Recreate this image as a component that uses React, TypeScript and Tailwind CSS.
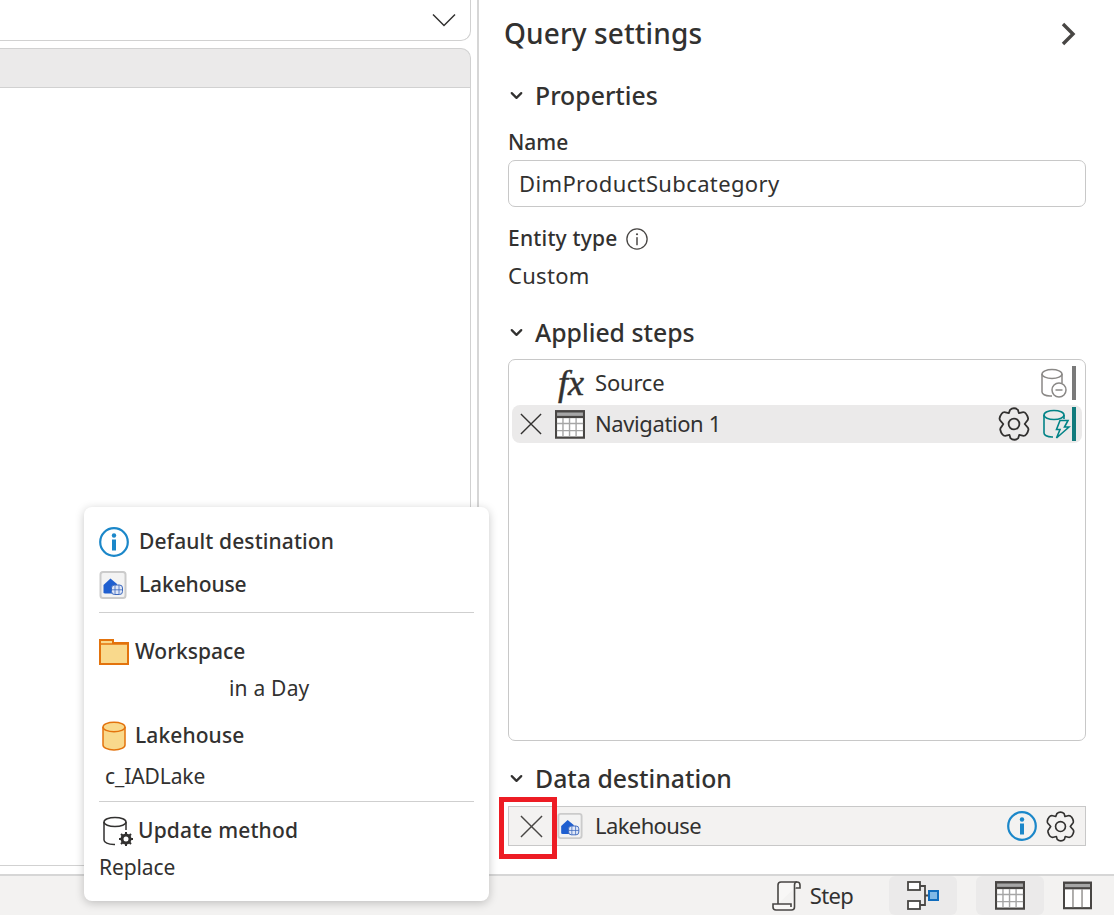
import { ChevronDown } from "lucide-react";

const font = "font-['Noto_Sans','Open_Sans',sans-serif]";

function SectionTitle({ children, className }: { children: string; className: string }) {
  return (
    <div className={`flex items-center ${className}`}>
      <ChevronDown size={19} strokeWidth={2.800} className="ml-[-1px] mr-[-1px] text-[#323130]" />
      <span className="ml-[10px] text-[24.800px] leading-[32px] font-medium text-[#323130]">{children}</span>
    </div>
  );
}

function Cross({ size, color = "#323130" }: { size: number; color?: string }) {
  return (
    <svg width={size} height={size} viewBox="0 0 24 24" fill="none">
      <path d="M1 1 23 23M23 1 1 23" stroke={color} strokeWidth="1.500" />
    </svg>
  );
}

// six toothed cog like the fluent one
function Gear({ size = 32 }: { size?: number }) {
  return (
    <svg width={size} height={size} viewBox="0 0 32 32" fill="none">
      <path
        d="M12.500 3.500c1-1 2-1.500 3.500-1.500s2.500.5 3.500 1.500l.8 2.800 3-.7c1.400-.3 2.600.2 3.400 1.300 1 1.300 1.500 2.500 1.800 4 .2 1-.3 1.800-1 2.500L25.500 16l2.300 2.600c.7.700 1.200 1.500 1 2.500-.3 1.500-.8 2.700-1.800 4-.8 1.100-2 1.600-3.400 1.300l-3-.7-.8 2.800c-1 1-2 1.500-3.500 1.500s-2.500-.5-3.500-1.500l-.8-2.800-3 .7c-1.400.3-2.600-.2-3.400-1.300-1-1.300-1.500-2.500-1.800-4-.2-1 .3-1.800 1-2.500L6.500 16l-2.300-2.600c-.7-.7-1.200-1.500-1-2.500.3-1.500.8-2.700 1.800-4 .8-1.100 2-1.600 3.400-1.300l3 .7z"
        stroke="#323130"
        strokeWidth="1.600"
        strokeLinejoin="round"
      />
      <circle cx="16" cy="16" r="4.800" stroke="#323130" strokeWidth="1.600" />
    </svg>
  );
}

function InfoCircle({ size, color = "#1b87c9", thin = false }: { size: number; color?: string; thin?: boolean }) {
  return (
    <svg width={size} height={size} viewBox="0 0 30 30" fill="none">
      <circle cx="15" cy="15" r="13.800" stroke={color} strokeWidth={thin ? 1.800 : 2.200} />
      <circle cx="15" cy="8.500" r={thin ? 1.500 : 2.200} fill={color} />
      <rect x={thin ? 14 : 13} y="12.500" width={thin ? 2 : 4} height="11" fill={color} />
    </svg>
  );
}

function LakehouseIcon({ size = 28 }: { size?: number }) {
  return (
    <svg width={size} height={size} viewBox="0 0 28 28">
      <rect x="1.500" y="1" width="25" height="26" rx="2.500" fill="#f3f3f3" stroke="#cbcbcb" strokeWidth="2" />
      <path d="M4.500 22v-8l7-6.500 6.500 5.500v9.500H6z" fill="#1f5fd0" />
      <rect x="12.500" y="14" width="11" height="9.500" rx="3" fill="#dfe7f7" stroke="#3c68bd" strokeWidth="1" />
      <path d="M12.500 18.800h11M16 14v9.500M20 14v9.500" stroke="#3c68bd" strokeWidth=".8" />
    </svg>
  );
}

function TableIcon({ w = 32, h = 30, cols = 4, color = "#484644" }: { w?: number; h?: number; cols?: number; color?: string }) {
  const xs = cols === 4 ? [8.500, 15.500, 22.500] : [11, 21];
  return (
    <svg width={w} height={h} viewBox="0 0 32 30">
      <rect x="1" y="1" width="30" height="28" fill="#fff" stroke={color} strokeWidth="2.400" />
      <rect x="1" y="1" width="30" height="6" fill="#a6a6a6" stroke={color} strokeWidth="2.400" />
      {cols === 4 && <path d="M2 14h28M2 21.500h28" stroke="#a6a6a6" strokeWidth="1.500" />}
      {xs.map((x) => (
        <path key={x} d={`M${x} 8v20`} stroke={cols === 4 ? "#a6a6a6" : "#8a8886"} strokeWidth="1.500" />
      ))}
    </svg>
  );
}

export default function App() {
  return (
    <div className={`relative flex h-[915px] w-[1114px] flex-col overflow-hidden bg-white text-[#323130] ${font}`}>
      <div className="flex h-[874px]">
        {/* left side, cropped data preview */}
        <div className="flex w-[479px] shrink-0 flex-col border-r-2 border-[#d6d6d6] pr-[6px]">
          <div className="flex h-[41px] items-center justify-end rounded-br-[10px] border-r border-b border-[#d1d1d1] pr-[14px]">
            <svg width="24" height="14" viewBox="0 0 24 14" fill="none">
              <path d="M1 1.500 12 12.500 23 1.500" stroke="#323130" strokeWidth="1.500" />
            </svg>
          </div>
          <div className="mt-[7px] h-[40px] rounded-tr-[10px] border-t border-r border-b border-[#d1d1d1] bg-[#ebeaea]" />
          <div className="h-[778px] border-r border-b border-[#d1d1d1]" />
        </div>

        {/* query settings */}
        <div className="flex min-w-0 flex-1 flex-col pr-[28px] pl-[29px]">
          <div className="mt-[14px] flex h-[38px] items-center justify-between">
            <h1 className="ml-[-4px] text-[28px] font-medium tracking-[0.1px] text-[#323130]">Query settings</h1>
            <svg width="17" height="24" viewBox="0 0 17 24" fill="none" className="mr-[9px] mt-[2px]">
              <path d="M3 2 13 12 3 22" stroke="#484644" strokeWidth="3.400" />
            </svg>
          </div>

          <SectionTitle className="mt-[27px]">Properties</SectionTitle>
          <label className="mt-[17px] text-[21px] leading-[28px] font-medium">Name</label>
          <div className="mt-[4px] flex h-[47px] items-center rounded-[7px] border border-[#c8c8c8] pl-[10px] text-[22px] tracking-[0.37px]">
            DimProductSubcategory
          </div>
          <div className="mt-[17px] flex h-[30px] items-center gap-[8px]">
            <span className="text-[21px] font-medium tracking-[0.2px]">Entity type</span>
            <InfoCircle size={22} color="#484644" thin />
          </div>
          <div className="mt-[6px] h-[30px] text-[22px] leading-[30px] tracking-[0.3px]">Custom</div>

          <SectionTitle className="mt-[26px]">Applied steps</SectionTitle>
          <div className="mt-[11px] flex h-[382px] flex-col rounded-[7px] border border-[#c8c8c8] px-[3px] pt-[5px]">
            <div className="flex h-[35px] items-center pr-[6px]">
              <span className="ml-[46px] w-[37px] font-['Liberation_Serif',serif] text-[36px] leading-[34px] italic [-webkit-text-stroke:0.5px_#323130]">fx</span>
              <span className="text-[22px] tracking-[-0.2px]">Source</span>
              <div className="ml-auto flex items-center gap-[5px]">
                <svg width="26" height="30" viewBox="0 0 26 30" fill="none">
                  <path d="M1 6v18c0 2 3 4 8 4h2M21 6v9" stroke="#8a8886" strokeWidth="1.500" />
                  <ellipse cx="11" cy="6" rx="10" ry="4.500" stroke="#8a8886" strokeWidth="1.500" />
                  <circle cx="18" cy="22" r="7" stroke="#8a8886" strokeWidth="1.500" fill="#fff" />
                  <path d="M14.500 22h7" stroke="#8a8886" strokeWidth="1.500" />
                </svg>
                <div className="h-[34px] w-[4px] bg-[#7a7a7a]" />
              </div>
            </div>
            <div className="mt-[5px] flex h-[38px] items-center rounded-[8px] bg-[#ebeaea] pr-[6px]">
              <div className="ml-[8px]">
                <Cross size={22} />
              </div>
              <div className="ml-[13px]">
                <TableIcon w={30} h={29} />
              </div>
              <span className="ml-[10px] pb-[2px] text-[22px] tracking-[-0.4px]">Navigation 1</span>
              <div className="ml-auto flex items-center">
                <Gear size={36} />
                <svg width="28" height="30" viewBox="0 0 28 30" fill="none" className="ml-[11px]">
                  <path d="M1 6v18c0 2 3 4 8 4h1M21 6v4" stroke="#038387" strokeWidth="1.600" />
                  <ellipse cx="11" cy="6" rx="10" ry="4.500" stroke="#038387" strokeWidth="1.600" />
                  <path d="M17 11.500h8l-3.500 6.500H26L13.500 29l3.500-8.500h-3.500z" stroke="#038387" strokeWidth="1.600" fill="#ebeaea" />
                </svg>
                <div className="ml-[1px] h-[34px] w-[4px] bg-[#117a7c]" />
              </div>
            </div>
          </div>

          <SectionTitle className="mt-[21px]">Data destination</SectionTitle>
          <div className="mt-[12px] flex h-[40px] items-center border border-[#c8c8c8] bg-[#f3f2f1] pr-[9px]">
            <div className="ml-[11px]">
              <Cross size={23} color="#484644" />
            </div>
            <div className="ml-[14px]">
              <LakehouseIcon size={26} />
            </div>
            <span className="ml-[12px] pb-[2px] text-[22px] tracking-[-0.6px]">Lakehouse</span>
            <div className="ml-auto">
              <InfoCircle size={30} />
            </div>
            <div className="ml-[7px] mr-[-1px]">
              <Gear size={33} />
            </div>
          </div>
        </div>
      </div>

      {/* status bar */}
      <div className="flex h-[41px] items-center justify-end border-t-2 border-[#d6d6d6] bg-[#f3f2f1]">
        <svg width="31" height="30" viewBox="0 0 31 30" fill="none" className="mr-[7px]">
          <path d="M6 23V4c0-1.500 1-3 3-3h16c2 0 3 1.500 3 3v3h-5.500" stroke="#484644" strokeWidth="1.600" fill="#f8f7f6" />
          <path d="M25 1c-1.500 0-2.500 1.500-2.500 3v22c0 2-1.500 3-3 3H4c-2 0-3-1.500-3-3v-3h18v3" stroke="#484644" strokeWidth="1.600" fill="#f8f7f6" />
        </svg>
        <span className="mr-[36px] text-[22px] tracking-[-0.7px]">Step</span>
        <div className="flex h-[39px] w-[68px] items-center justify-center rounded-[6px] bg-[#ebeaea]">
          <svg width="32" height="29" viewBox="0 0 32 29" fill="none">
            <rect x="1" y="1" width="12" height="8" stroke="#484644" strokeWidth="1.800" fill="#fff" />
            <rect x="1" y="20" width="12" height="8" stroke="#484644" strokeWidth="1.800" fill="#fff" />
            <path d="M13 5h5v19h-5M18 14.500h4" stroke="#484644" strokeWidth="1.800" />
            <rect x="22" y="10" width="9" height="9" fill="#7fb8e6" stroke="#0f6cbd" strokeWidth="2" />
          </svg>
        </div>
        <div className="ml-[19px] flex h-[39px] w-[68px] items-center justify-center rounded-[6px] bg-[#ebeaea]">
          <TableIcon w={30} h={29} />
        </div>
        <div className="mr-[22px] ml-[19px]">
          <TableIcon w={29} h={29} cols={3} />
        </div>
      </div>

      {/* red highlight drawn over the row */}
      <div className="absolute top-[797px] left-[499px] h-[62px] w-[58px] border-[5px] border-[#ed1c24]" />

      {/* destination popover */}
      <div className="absolute top-[507px] left-[84px] flex h-[394px] w-[405px] flex-col rounded-[8px] bg-white px-[15px] shadow-[0_2px_10px_rgba(0,0,0,0.22)]">
        <div className="mt-[19px] flex h-[32px] items-center">
          <InfoCircle size={30} />
          <span className="ml-[10px] text-[21px] font-medium tracking-[0.1px]">Default destination</span>
        </div>
        <div className="mt-[11px] flex h-[32px] items-center">
          <LakehouseIcon />
          <span className="ml-[12px] text-[21px] font-medium tracking-[-0.1px]">Lakehouse</span>
        </div>
        <div className="mt-[11px] h-px bg-[#cfcfcf]" />
        <div className="mt-[23px] flex h-[32px] items-center">
          <svg width="30" height="26" viewBox="0 0 30 26">
            <path d="M1 1h13v3h15v21H1z" fill="#f9d98c" stroke="#e3730d" strokeWidth="2" />
            <path d="M1 5h28" stroke="#e3730d" strokeWidth="1.500" />
          </svg>
          <span className="ml-[6px] text-[21px] font-medium">Workspace</span>
        </div>
        <div className="mt-[5px] h-[30px] pl-[130px] text-[21px] leading-[30px] tracking-[0.2px]">in a Day</div>
        <div className="mt-[17px] flex h-[32px] items-center">
          <svg width="24" height="30" viewBox="0 0 24 30" fill="none" className="ml-[3px]">
            <path d="M1 6v18c0 2.500 4.500 5 11 5s11-2.500 11-5V6" fill="#f9d98c" stroke="#e3730d" strokeWidth="1.500" />
            <ellipse cx="12" cy="6" rx="11" ry="4.800" fill="#f9d98c" stroke="#e3730d" strokeWidth="1.500" />
          </svg>
          <span className="ml-[9px] text-[21px] font-medium tracking-[0.1px]">Lakehouse</span>
        </div>
        <div className="mt-[9px] h-[30px] pl-[6px] text-[21px] leading-[30px] tracking-[-0.1px]">c_IADLake</div>
        <div className="mt-[10px] h-px bg-[#cfcfcf]" />
        <div className="mt-[13px] flex h-[32px] items-center">
          <div className="relative ml-[4px] h-[30px] w-[30px]">
            <svg width="30" height="30" viewBox="0 0 30 30" fill="none">
              <path d="M1 6v18c0 2.500 4 4.500 10 4.500h1M23 6v8" stroke="#323130" strokeWidth="1.500" />
              <ellipse cx="12" cy="6" rx="11" ry="4.500" stroke="#323130" strokeWidth="1.500" />
              <circle cx="23" cy="23" r="4" stroke="#323130" strokeWidth="3" />
              <path d="M23 16v3M23 27v3M16 23h3M27 23h3M18 18l2 2M26 26l2 2M28 18l-2 2M20 26l-2 2" stroke="#323130" strokeWidth="2" />
            </svg>
          </div>
          <span className="ml-[5px] text-[21px] font-medium tracking-[0.15px]">Update method</span>
        </div>
        <div className="mt-[5px] h-[30px] text-[21px] leading-[30px] tracking-[-0.1px]">Replace</div>
      </div>
    </div>
  );
}
